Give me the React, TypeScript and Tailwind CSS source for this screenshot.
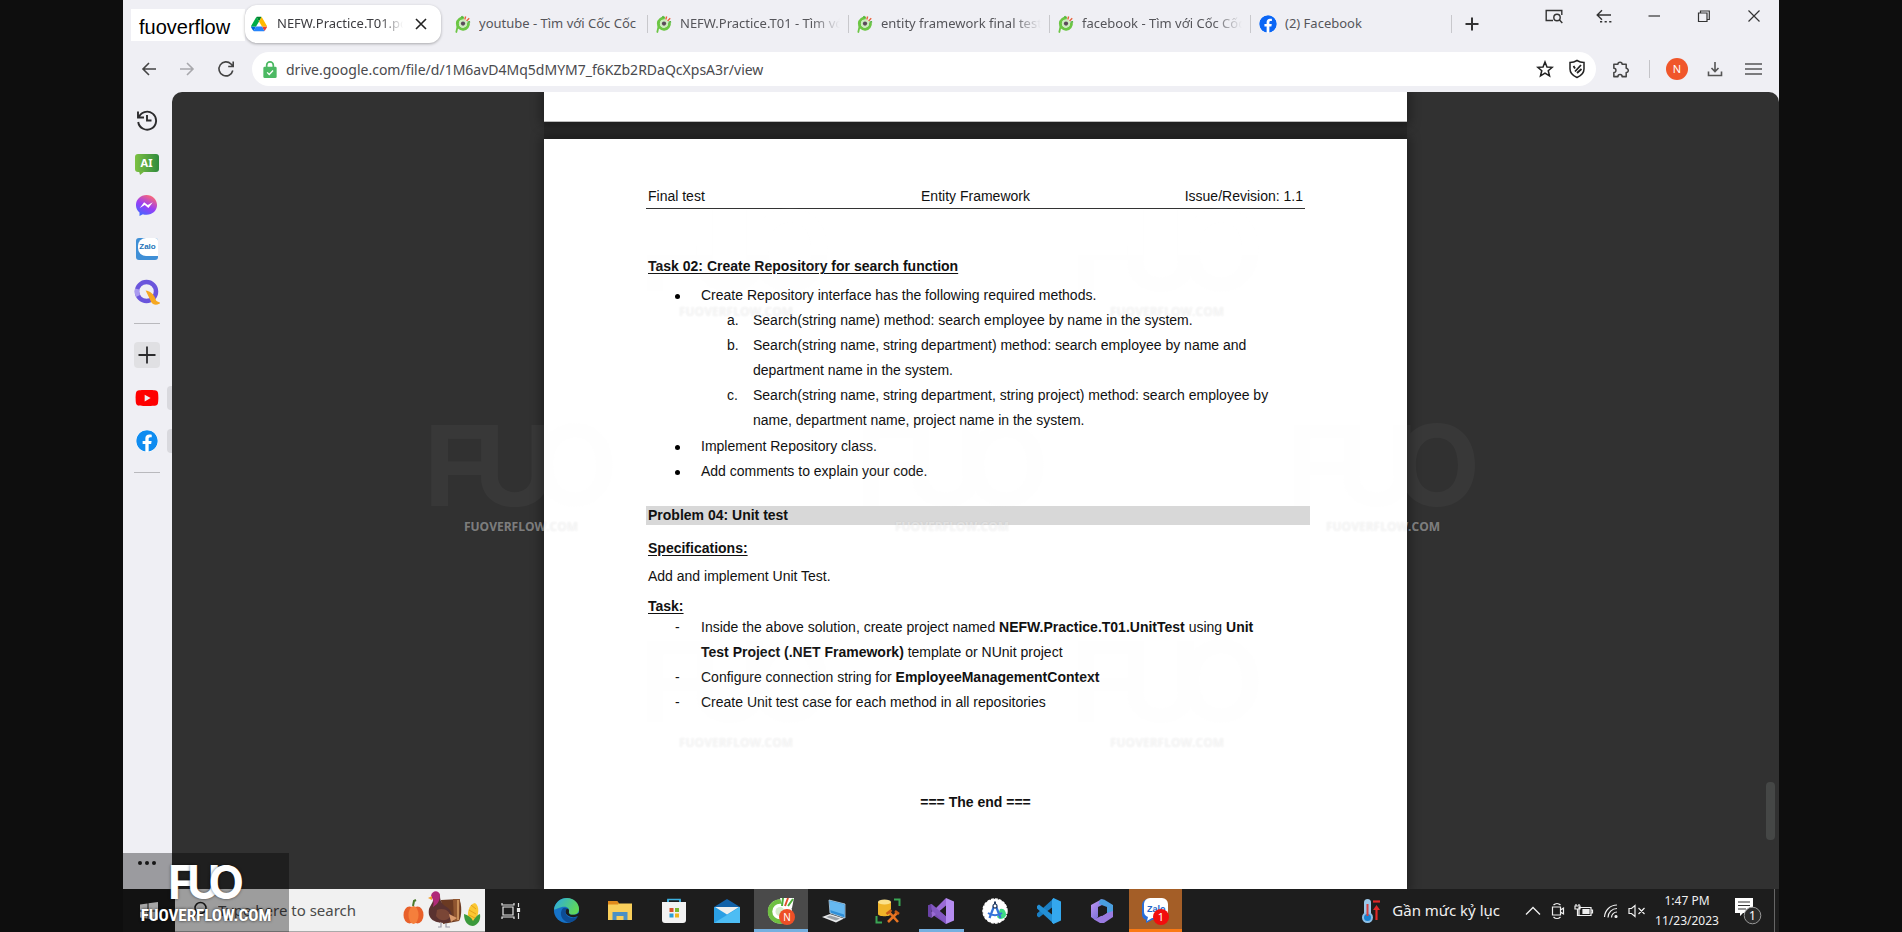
import type { ReactNode } from "react";
import { FaFacebook, FaYoutube } from "react-icons/fa";

const DriveIcon = () => (
  <svg viewBox="0 0 87 78" className="h-4 w-4 shrink-0">
    <path d="M6.6 66.9l3.8 6.6c.8 1.4 2 2.500 3.300 3.300L27.500 53H0c0 1.500.4 3.100 1.200 4.500z" fill="#0066da" />
    <path d="M43.700 25L29.900 1.200c-1.300.8-2.500 1.900-3.300 3.300L1.200 48.500C.4 49.900 0 51.500 0 53h27.500z" fill="#00ac47" />
    <path d="M73.600 76.800c1.300-.8 2.500-1.900 3.300-3.300l9.200-16c.8-1.400 1.200-3 1.200-4.500H59.800l5.900 11.500z" fill="#ea4335" />
    <path d="M43.700 25L57.400 1.200C56.100.4 54.500 0 52.900 0H34.400c-1.600 0-3.200.5-4.500 1.200z" fill="#00832d" />
    <path d="M59.800 53H27.500L13.700 76.800c1.400.8 2.900 1.200 4.500 1.200h50.900c1.600 0 3.200-.5 4.500-1.200z" fill="#2684fc" />
    <path d="M73.400 26.500L60.700 4.500c-.8-1.400-2-2.500-3.300-3.300L43.700 25l16.100 28h27.500c0-1.500-.4-3.100-1.200-4.500z" fill="#ffba00" />
  </svg>
);

const CocTabIcon = () => (
  <svg viewBox="0 0 18 20" className="h-[18px] w-4 shrink-0">
    <path d="M3 12L1.500 19" stroke="#6cc644" strokeWidth="2" strokeLinecap="round" />
    <path d="M15 8.500a6.200 6.200 0 1 1-5-5" fill="none" stroke="#6cc644" strokeWidth="3.400" />
    <circle cx="9" cy="9.500" r="4.600" fill="#cdeabf" />
    <circle cx="9" cy="9.500" r="2.400" fill="#5b4a5a" />
    <path d="M11 5l1-3.500M13 6.500l3-3" stroke="#e8623d" strokeWidth="1.600" />
    <path d="M8.500 3l-1-2M14 8l3-.6" stroke="#4fae3a" strokeWidth="1.600" />
  </svg>
);

type Tab = { title: string; icon: ReactNode; fade: boolean };

const tabs: Tab[] = [
  { title: "youtube - Tìm với Cốc Cốc", icon: <CocTabIcon />, fade: false },
  { title: "NEFW.Practice.T01 - Tìm với Cốc Cốc", icon: <CocTabIcon />, fade: true },
  { title: "entity framework final test", icon: <CocTabIcon />, fade: true },
  { title: "facebook - Tìm với Cốc Cốc", icon: <CocTabIcon />, fade: true },
  { title: "(2) Facebook", icon: <FaFacebook className="h-[18px] w-[18px] shrink-0 rounded-full bg-white text-[#0b66f5]" />, fade: false },
];

const fadeMask = "[mask-image:linear-gradient(to_right,black_82%,transparent)]";

function TabStrip() {
  return (
    <div className="flex h-[48px] items-start">
      <div className="mt-[9px] ml-2 flex h-8 w-[114px] items-center bg-white pt-1 pl-2 text-[20px] leading-7 text-black">
        fuoverflow
      </div>
      <div className="mt-[5px] flex h-[38px] w-[196px] items-center rounded-xl bg-white pr-3 pl-1.5 shadow-[0_1px_3px_rgba(0,0,0,0.3)]">
        <DriveIcon />
        <span className={`ml-2.5 w-[130px] overflow-hidden font-['Noto_Sans',sans-serif] text-[13px] whitespace-nowrap text-[#3c3c40] ${fadeMask}`}>
          NEFW.Practice.T01.pdf
        </span>
        <button aria-label="Close tab" className="ml-2.5 flex h-4 w-4 items-center justify-center">
          <svg viewBox="0 0 12 12" className="h-3 w-3 shrink-0" stroke="#222" strokeWidth="1.600"><path d="M1 1l10 10M11 1L1 11" /></svg>
        </button>
      </div>
      <div className="mt-[5px] flex h-[38px] pl-1.5">
        {tabs.map((t) => (
          <button key={t.title} className="flex w-[201px] items-center pl-2 text-left">
            {t.icon}
            <span className={`ml-2 w-[160px] overflow-hidden font-['Noto_Sans',sans-serif] text-[13px] whitespace-nowrap text-[#55555a] ${t.fade ? fadeMask : ""}`}>
              {t.title}
            </span>
            <span className="ml-auto h-[18px] w-px shrink-0 bg-[#c8c8cc]" />
          </button>
        ))}
      </div>
      <button aria-label="New tab" className="mt-4 ml-3">
        <svg viewBox="0 0 16 16" className="h-4 w-4" stroke="#333" strokeWidth="2"><path d="M8 1.500v13M1.500 8h13" /></svg>
      </button>
      <div className="mt-[7px] mr-4 ml-auto flex gap-8 text-[#333]">
        <button aria-label="Search tabs">
          <svg viewBox="0 0 18 18" className="h-[18px] w-[18px]" fill="none" stroke="currentColor" strokeWidth="1.400">
            <path d="M8 13.500H1.200V3.500h15.600V8" /><circle cx="12" cy="10.500" r="3.200" /><path d="M14.300 12.800l3 3.200" />
          </svg>
        </button>
        <button aria-label="Restore last tab">
          <svg viewBox="0 0 18 18" className="h-[18px] w-[18px]" fill="none" stroke="currentColor" strokeWidth="1.400">
            <path d="M16 8H2.500M7 3.200L2.200 8 7 12.800" /><path d="M5 14.800h12" strokeDasharray="2.200 2.400" />
          </svg>
        </button>
        <button aria-label="Minimize">
          <svg viewBox="0 0 18 18" className="h-[18px] w-[18px]" stroke="currentColor" strokeWidth="1.200"><path d="M3.500 9h11.500" /></svg>
        </button>
        <button aria-label="Restore window">
          <svg viewBox="0 0 18 18" className="h-[18px] w-[18px]" fill="none" stroke="currentColor" strokeWidth="1.200">
            <path d="M3.500 6h8.500v8.500H3.500zM5.500 6V4h8.800v8.500H12" />
          </svg>
        </button>
        <button aria-label="Close window">
          <svg viewBox="0 0 18 18" className="h-[18px] w-[18px]" stroke="currentColor" strokeWidth="1.200"><path d="M3.500 3.500l11 11M14.500 3.500l-11 11" /></svg>
        </button>
      </div>
    </div>
  );
}

function Toolbar() {
  return (
    <div className="flex h-[44px] items-center pt-0.5 pb-1">
      <button aria-label="Back" className="ml-[18px]">
        <svg viewBox="0 0 16 16" className="h-4 w-4" fill="none" stroke="#444" strokeWidth="1.600"><path d="M15 8H2M8 2L2 8l6 6" /></svg>
      </button>
      <button aria-label="Forward" className="ml-[22px]">
        <svg viewBox="0 0 16 16" className="h-4 w-4" fill="none" stroke="#a8a8ac" strokeWidth="1.600"><path d="M1 8h13M8 2l6 6-6 6" /></svg>
      </button>
      <button aria-label="Reload" className="ml-[22px]">
        <svg viewBox="0 0 18 18" className="h-[18px] w-[18px]" fill="none" stroke="#444" strokeWidth="1.600"><path d="M15.800 10.500A7 7 0 1 1 14 4l2 2.200M16.200 1.500v5h-5" /></svg>
      </button>
      <div className="ml-[17px] flex h-[34px] flex-1 items-center rounded-full bg-white pr-2.5 pl-2.5">
        <svg viewBox="0 0 16 20" className="h-[19px] w-4 shrink-0">
          <path d="M4.500 8V5.500a3.500 3.500 0 0 1 7 0V8" fill="none" stroke="#4cb963" strokeWidth="1.800" />
          <rect x="1" y="7" width="14" height="12" rx="1.500" fill="#4cb963" />
          <path d="M5 13l2.200 2.200L11.200 11" fill="none" stroke="#fff" strokeWidth="1.400" />
        </svg>
        <input
          aria-label="Address"
          readOnly
          value="drive.google.com/file/d/1M6avD4Mq5dMYM7_f6KZb2RDaQcXpsA3r/view"
          className="ml-2 min-w-0 flex-1 bg-transparent font-['Noto_Sans',sans-serif] text-[14px] text-[#4a4a4e] outline-none"
        />
        <button aria-label="Bookmark">
          <svg viewBox="0 0 20 20" className="h-[18px] w-[18px]" fill="none" stroke="#222" strokeWidth="1.700"><path d="M10 2.200l2.200 5.500 5.900.4-4.500 3.800 1.400 5.700L10 14.500l-5 3.100 1.400-5.700L1.900 8.100l5.900-.4z" /></svg>
        </button>
        <button aria-label="Privacy shield" className="ml-3.5">
          <svg viewBox="0 0 18 20" className="h-5 w-[18px]" fill="none" stroke="#222" strokeWidth="1.500">
            <path d="M9 1.500c2 1.300 4.500 2 7 2V10c0 4-3.500 7-7 8.500C5.500 17 2 14 2 10V3.500c2.500 0 5-.7 7-2z" />
            <path d="M5.500 7l1.500 2.500M7 12.500L13 6M9 14l4.500-4" strokeWidth="1.800" />
          </svg>
        </button>
      </div>
      <div className="mr-[17px] ml-[15px] flex items-center">
        <button aria-label="Extensions">
          <svg viewBox="0 0 20 20" className="h-[19px] w-[19px]" fill="none" stroke="#444" strokeWidth="1.600" strokeLinejoin="round">
            <path d="M3 4.500h4.300a2.200 2.200 0 1 1 4.400 0H16v4.300a2.200 2.200 0 1 1 0 4.400v4.300h-4.300a2.200 2.200 0 0 0-4.400 0H3v-4.300a2.200 2.200 0 0 0 0-4.400z" />
          </svg>
        </button>
        <span className="ml-[19px] h-[18px] w-px bg-[#c4c4c8]" />
        <button className="ml-4 flex h-[22px] w-[22px] items-center justify-center rounded-full bg-[#f0562a] font-['Noto_Sans',sans-serif] text-[11px] text-white">N</button>
        <button aria-label="Downloads" className="ml-[19px]">
          <svg viewBox="0 0 16 16" className="h-4 w-4" fill="none" stroke="#555" strokeWidth="1.600"><path d="M8 1v9M4.500 7L8 10.500 11.500 7M1.500 10.500v4h13v-4" /></svg>
        </button>
        <button aria-label="Menu" className="ml-[22px]">
          <svg viewBox="0 0 17 16" className="h-4 w-[17px]" stroke="#555" strokeWidth="1.500"><path d="M0 3h17M0 8h17M0 13h17" /></svg>
        </button>
      </div>
    </div>
  );
}

function SideItem({ label, marker, children }: { label: string; marker?: boolean; children: ReactNode }) {
  return (
    <button aria-label={label} className="flex h-[43px] w-full shrink-0 items-center">
      <span className="flex w-[44px] justify-center pl-[3px]">{children}</span>
      {marker && <span className="h-6 flex-1 rounded-l bg-[#d9d9de]" />}
    </button>
  );
}

function SideDivider() {
  return <div className="ml-[11px] flex h-5 w-[26px] shrink-0 items-center"><span className="h-px w-full bg-[#b9b9bd]" /></div>;
}

function Sidebar() {
  return (
    <nav className="flex w-[49px] shrink-0 flex-col pt-1.5">
      <SideItem label="History">
        <svg viewBox="0 0 22 22" className="h-[22px] w-[22px]" fill="none" stroke="#2b2b2d" strokeWidth="1.900">
          <path d="M2.500 9a9 9 0 1 1-.3 4M2 2.500V8.500h6" /><path d="M11 6v5.500h4.500" />
        </svg>
      </SideItem>
      <SideItem label="AI chat">
        <span className="relative flex h-[18px] w-6 items-center justify-center rounded-[3px] bg-gradient-to-r from-[#7cc142] to-[#2e8b3d] font-['Noto_Sans',sans-serif] text-[11px] leading-[18px] font-bold text-white">
          AI
          <svg viewBox="0 0 6 4" className="absolute top-[17px] left-1 h-1 w-1.5"><path d="M0 0h6L1 4z" fill="#6fb53f" /></svg>
        </span>
      </SideItem>
      <SideItem label="Messenger">
        <svg viewBox="0 0 24 24" className="h-[23px] w-[23px]">
          <defs>
            <linearGradient id="msg" x1="0.2" y1="1" x2="0.700" y2="0">
              <stop offset="0" stopColor="#3a6bff" /><stop offset="0.500" stopColor="#9a3df5" /><stop offset="1" stopColor="#ff6a70" />
            </linearGradient>
          </defs>
          <path d="M12 1C5.700 1 1 5.600 1 11.500c0 3.200 1.400 6 3.700 7.900V23l3.500-1.900c1.200.4 2.500.6 3.800.6 6.300 0 11-4.500 11-10.200S18.300 1 12 1z" fill="url(#msg)" />
          <path d="M5 14.500l4.500-6 3.800 3 5.200-3-4.500 6-3.800-3z" fill="#fff" />
        </svg>
      </SideItem>
      <SideItem label="Zalo">
        <span className="flex h-[22px] w-[22px] items-center justify-end overflow-hidden rounded-[3px] bg-[#3f8fd6] pb-1">
          <span className="flex h-[18px] w-5 items-center justify-center rounded-l-lg bg-white text-[8px] font-bold text-[#2674b8]">Zalo</span>
        </span>
      </SideItem>
      <SideItem label="Search assistant">
        <svg viewBox="0 0 26 26" className="h-[26px] w-[26px]" fill="none">
          <circle cx="12.500" cy="12.500" r="9.500" stroke="#6a55dc" strokeWidth="4.500" />
          <path d="M4 17a9.500 9.500 0 0 1-.8-7" stroke="#a99af0" strokeWidth="4.500" />
          <path d="M13 12.500c4 1 7 4.500 8.500 9.500 1 1 2.500 1.500 3.500 2-3 1.500-6 .500-7.500-2L13 12.500z" fill="#f6a821" stroke="#f6a821" strokeWidth="1.500" />
        </svg>
      </SideItem>
      <SideDivider />
      <SideItem label="Add shortcut">
        <span className="flex h-[26px] w-[26px] items-center justify-center rounded bg-[#e0e0e3]">
          <svg viewBox="0 0 18 18" className="h-[18px] w-[18px]" stroke="#2b2b2d" strokeWidth="1.800"><path d="M9 .5v17M.5 9h17" /></svg>
        </span>
      </SideItem>
      <SideItem label="YouTube" marker>
        <FaYoutube className="h-6 w-6 shrink-0 text-[#fe0000]" />
      </SideItem>
      <SideItem label="Facebook" marker>
        <FaFacebook className="h-[22px] w-[22px] shrink-0 rounded-full bg-white text-[#0f8cf0]" />
      </SideItem>
      <SideDivider />
      <button aria-label="More" className="mt-auto mb-6 ml-[15px] flex gap-[3px]">
        <span className="h-1 w-1 rounded-full bg-[#222]" />
        <span className="h-1 w-1 rounded-full bg-[#222]" />
        <span className="h-1 w-1 rounded-full bg-[#222]" />
      </button>
    </nav>
  );
}

function Item({ mark, children }: { mark: ReactNode; children: ReactNode }) {
  return (
    <li className="flex">
      <span className="w-[26px] shrink-0">{mark}</span>
      <div className="whitespace-nowrap">{children}</div>
    </li>
  );
}

const Dot = () => <span className="mt-[11px] block h-[5px] w-[5px] rounded-full bg-black" />;

function DocumentPage() {
  return (
    <article className="h-full bg-white px-[102px] pt-[45px] text-[14px] leading-[25px] text-[#111] shadow-[0_0_10px_3px_rgba(0,0,0,0.35)]">
      <header className="grid grid-cols-3 border-b border-[#333] px-0.5 leading-6">
        <span>Final test</span>
        <span className="text-center">Entity Framework</span>
        <span className="text-right">Issue/Revision: 1.1</span>
      </header>
      <div className="px-0.5">
        <h2 className="mt-[45px] font-bold underline underline-offset-2">Task 02: Create Repository for search function</h2>
        <ul className="mt-1 pl-[27px]">
          <Item mark={<Dot />}>
            Create Repository interface has the following required methods.
            <ol className="pb-px pl-[26px]">
              <Item mark="a.">Search(string name) method: search employee by name in the system.</Item>
              <Item mark="b.">Search(string name, string department) method: search employee by name and<br />department name in the system.</Item>
              <Item mark="c.">Search(string name, string department, string project) method: search employee by<br />name, department name, project name in the system.</Item>
            </ol>
          </Item>
          <Item mark={<Dot />}>Implement Repository class.</Item>
          <Item mark={<Dot />}>Add comments to explain your code.</Item>
        </ul>
      </div>
      <h2 className="mt-[22px] -mr-[5px] bg-[#d8d8d8] pl-0.5 leading-[19px] font-bold">Problem 04: Unit test</h2>
      <div className="px-0.5">
        <h3 className="mt-[11px] font-bold underline underline-offset-2">Specifications:</h3>
        <p className="mt-[3px]">Add and implement Unit Test.</p>
        <h3 className="mt-[9px] leading-[17px] font-bold underline underline-offset-2">Task:</h3>
        <ul className="pl-[27px]">
          <Item mark="-">Inside the above solution, create project named <b>NEFW.Practice.T01.UnitTest</b> using <b>Unit<br />Test Project (.NET Framework)</b> template or NUnit project</Item>
          <Item mark="-">Configure connection string for <b>EmployeeManagementContext</b></Item>
          <Item mark="-">Create Unit test case for each method in all repositories</Item>
        </ul>
        <p className="mt-[75px] text-center font-bold">=== The end ===</p>
      </div>
    </article>
  );
}

function Watermark({ place }: { place: string }) {
  return (
    <div className={`absolute flex w-[172px] flex-col items-center ${place}`}>
      <div className="flex font-['Inter',sans-serif] text-[112px] leading-[84px] font-bold text-[#f0f0f0] opacity-[0.035]">
        <span className="-mr-4">F</span><span className="-mr-6">U</span><span>O</span>
      </div>
      <span className="mt-3 font-['Open_Sans',sans-serif] text-[12px] leading-4 font-bold text-white/40 [text-shadow:0_0_2px_rgba(0,0,0,0.08)]">FUOVERFLOW.COM</span>
    </div>
  );
}

function Viewer() {
  return (
    <main className="relative min-w-0 flex-1 overflow-hidden rounded-t-[10px] bg-[#313131]">
      <div className="mx-auto flex h-full w-[863px] flex-col gap-[17px] bg-[#292929]">
        <div className="h-[30px] shrink-0 border-b border-[#bbb] bg-white shadow-[0_0_10px_3px_rgba(0,0,0,0.35)]" />
        <div className="min-h-0 flex-1"><DocumentPage /></div>
      </div>
      <div className="pointer-events-none absolute inset-0">
        <Watermark place="top-[116px] left-[478px]" />
        <Watermark place="top-[116px] left-[909px]" />
        <Watermark place="top-[331px] left-[263px]" />
        <Watermark place="top-[331px] left-[694px]" />
        <Watermark place="top-[331px] left-[1125px]" />
        <Watermark place="top-[547px] left-[478px]" />
        <Watermark place="top-[547px] left-[909px]" />
      </div>
      <div className="absolute right-1 bottom-[49px] h-[58px] w-[9px] rounded bg-[#454746]" />
    </main>
  );
}

const EdgeIcon = () => (
  <svg viewBox="0 0 28 28" className="h-[27px] w-[27px]">
    <defs>
      <linearGradient id="eg" x1="0" y1="0" x2="1" y2="0.400"><stop offset="0" stopColor="#2aa9e8" /><stop offset="1" stopColor="#5fd85a" /></linearGradient>
    </defs>
    <circle cx="14" cy="14" r="13" fill="#1673c8" />
    <path d="M1 13C2 5.500 8 1 14.500 1 22 1 27 6.500 27 12.500c0 4-3 6-6.500 6-3 0-4.500-1.500-4-3 1-3-1-5.500-4.500-5.500C7 10 3 13 1 13z" fill="url(#eg)" />
    <path d="M10 12c-4 5-1 13 6 14.500 4 0 8-2.500 9.500-6C20 23 13 21 13 15.500c0-2 .5-2.500 1.500-3.500-1.500-1-3-1-4.500 0z" fill="#0d4c94" />
    <path d="M14.500 12c-2 2-2 5 .5 7 3.500 2.500 8 2.500 11.500 .5l1.500-4c-2 2-5 3-7.500 3-3 0-4.500-1.500-4-3 .500-1.500 0-3-2-3.500z" fill="#1d1d1d" />
  </svg>
);
const FolderIcon = () => (
  <svg viewBox="0 0 26 22" className="h-[22px] w-[26px]">
    <path d="M1 1h9l2 2.500h13V20H1z" fill="#f9cf5b" /><path d="M1 1h9l2 2.500-1 1H1z" fill="#e08a1c" />
    <path d="M5.500 20v-8h15v8h-4v-4h-7v4z" fill="#4a90c4" />
  </svg>
);
const StoreIcon = () => (
  <svg viewBox="0 0 26 28" className="h-7 w-[26px]">
    <path d="M7 7V2.500h12V7" fill="none" stroke="#3db1e0" strokeWidth="1.600" />
    <path d="M1 5h24v18a3 3 0 0 1-3 3H4a3 3 0 0 1-3-3z" fill="#f2f2f2" />
    <path d="M7 5V2.500M19 5V2.500" stroke="#3db1e0" strokeWidth="1.600" />
    <path d="M8.500 11h4v4h-4z" fill="#d9532c" /><path d="M14 11h4v4h-4z" fill="#7cb82f" /><path d="M8.500 16.500h4v4h-4z" fill="#2a9fd8" /><path d="M14 16.500h4v4h-4z" fill="#f0b51e" />
  </svg>
);
const MailIcon = () => (
  <svg viewBox="0 0 26 26" className="h-[26px] w-[26px]">
    <path d="M0 9L13 1l13 8v3H0z" fill="#1262a8" /><path d="M0 9h26v16H0z" fill="#2a9fe4" /><path d="M0 25L26 9v16z" fill="#4dbdf4" /><path d="M1 9h24l-12 7.500z" fill="#f0f0ee" />
  </svg>
);
const CocIcon = () => (
  <svg viewBox="0 0 28 28" className="h-7 w-7">
    <circle cx="13" cy="14.500" r="12" fill="#fff" />
    <path d="M21 8.500A10 10 0 1 0 21 20.500" fill="none" stroke="#6fc042" strokeWidth="4.500" />
    <circle cx="13" cy="14.500" r="4.500" fill="#d7eccb" />
    <path d="M13 1l14 0-2 10-8 2z" fill="#fff" />
    <path d="M15 9l1-8M21 9l5-7" stroke="#4fae3a" strokeWidth="2" /><path d="M18 9l3-8" stroke="#e0502c" strokeWidth="2" />
    <circle cx="20" cy="20" r="8" fill="#ee4f27" />
    <text x="20" y="24" textAnchor="middle" fontSize="10" fill="#fff" fontFamily="Noto Sans, sans-serif">N</text>
  </svg>
);
const LaptopIcon = () => (
  <svg viewBox="0 0 26 26" className="h-[26px] w-[26px]">
    <path d="M8 2l16 4v14L9 15z" fill="#2f8fd8" stroke="#b8d4e8" strokeWidth=".8" /><path d="M9 3l14 3.600v10L9 12z" fill="#66b8f0" />
    <path d="M1 19l8-3 14 4.500-8 4z" fill="#e8eaec" /><path d="M5 19l4-1.500 10 3-4 2z" fill="#9aa0a6" />
  </svg>
);
const SqlIcon = () => (
  <svg viewBox="0 0 26 26" className="h-[26px] w-[26px]" fill="none">
    <path d="M3 4v12c0 3 13 3 13 0V4z" fill="#f0b429" /><ellipse cx="9.500" cy="4" rx="6.500" ry="2.500" fill="#fbe08a" />
    <path d="M19 1.500h5.500V8M7 24.500H1.500V18" stroke="#3aa655" strokeWidth="2" />
    <path d="M13 24l9-9M14 14l9 10" stroke="#e87422" strokeWidth="2.600" /><path d="M11.500 16l5-4M20 13l4 3" stroke="#c85d16" strokeWidth="2.600" />
  </svg>
);
const VsIcon = () => (
  <svg viewBox="0 0 26 26" className="h-[26px] w-[26px]">
    <path d="M0 7.500L3.500 6 18 18.500V26L3.500 16v-6L0 18.500z" fill="#7b50b8" />
    <path d="M0 7.500L3.500 6v14L0 18.500z" fill="#6a42a6" />
    <path d="M3.500 20L18 7.500V0L3.500 14.500z" fill="#9a6ad6" />
    <path d="M3.500 6L18 18.500V26L3.500 12z" fill="#8358c2" />
    <path d="M18 0l8 3.500v19L18 26z" fill="#b58cf0" />
  </svg>
);
const AndroidStudioIcon = () => (
  <svg viewBox="0 0 26 26" className="h-[26px] w-[26px]" fill="none">
    <circle cx="13" cy="13" r="12" fill="#fff" stroke="#fff" strokeWidth="1.500" strokeDasharray="3 1" />
    <path d="M18 11a5 5 0 1 1-3 8z" fill="#3ddc84" />
    <path d="M12.500 7L7.500 20M13.500 7l5 13" stroke="#3473d9" strokeWidth="2.200" /><path d="M6 15c4 3 10 3 14 0" stroke="#3473d9" strokeWidth="1.800" />
    <path d="M13 3.500v4" stroke="#223a60" strokeWidth="2" /><circle cx="13" cy="8" r="2" stroke="#223a60" strokeWidth="1.200" fill="#fff" />
  </svg>
);
const VsCodeIcon = () => (
  <svg viewBox="0 0 26 26" className="h-[26px] w-[26px]">
    <path d="M19 0L2 15.500v2.500l2 1.500L19 8z" fill="#1a7fc4" /><path d="M19 26L2 10.500V8l2-1.500L19 18z" fill="#2390d6" /><path d="M18.500 0L26 3.500v19L18.500 26 17 24.500V1.500z" fill="#34a8ee" />
  </svg>
);
const OfficeIcon = () => (
  <svg viewBox="0 0 26 26" className="h-[26px] w-[26px]">
    <defs><linearGradient id="of" x1="0" y1="0" x2="1" y2="1"><stop offset="0" stopColor="#c69af5" /><stop offset="1" stopColor="#5b5fd0" /></linearGradient></defs>
    <path d="M13 1L2 7v12l4 3 3-3V9l8-4z" fill="url(#of)" />
    <path d="M11 1.500h4L24 7v12l-6-4V9l-8-3z" fill="#4a9fe0" />
    <path d="M24 13v6l-9 6h-4l-6-3.500 13-6.500z" fill="#9a7be0" />
    <path d="M13 8.500l4 2.500v4.500L13 18l-4-2.500V11z" fill="#1d1d1d" />
  </svg>
);
const ZaloIcon = () => (
  <svg viewBox="0 0 30 28" className="h-7 w-[30px]">
    <path d="M8 2h13a6 6 0 0 1 6 6v9a6 6 0 0 1-6 6H12l-6 3V23a6 6 0 0 1-4-6V8a6 6 0 0 1 6-6z" fill="#2a6fd8" /><path d="M10 1h12a6 6 0 0 1 6 6v8a6 6 0 0 1-6 6H12l-5 3 1-4a6 6 0 0 1-4-6V7a6 6 0 0 1 6-6z" fill="#fff" />
    <text x="7" y="15" fontSize="9" fontWeight="700" fill="#1e64c8" fontFamily="Liberation Sans, sans-serif">Zalo</text>
    <circle cx="21" cy="20" r="8" fill="#f20d0d" />
    <text x="21" y="24" textAnchor="middle" fontSize="11" fill="#fff" fontFamily="Noto Sans, sans-serif">1</text>
  </svg>
);

type TaskbarApp = { name: string; icon: ReactNode; style: string; line: string };

const apps: TaskbarApp[] = [
  { name: "Edge", icon: <EdgeIcon />, style: "", line: "" },
  { name: "File Explorer", icon: <FolderIcon />, style: "", line: "" },
  { name: "Store", icon: <StoreIcon />, style: "", line: "" },
  { name: "Mail", icon: <MailIcon />, style: "", line: "" },
  { name: "Browser", icon: <CocIcon />, style: "bg-[#4a4a4a]", line: "inset-x-0 bg-[#76b0e0]" },
  { name: "Remote desktop", icon: <LaptopIcon />, style: "", line: "" },
  { name: "SQL tools", icon: <SqlIcon />, style: "", line: "" },
  { name: "Visual Studio", icon: <VsIcon />, style: "", line: "inset-x-1 bg-[#76b0e0]" },
  { name: "Android Studio", icon: <AndroidStudioIcon />, style: "", line: "" },
  { name: "Code", icon: <VsCodeIcon />, style: "", line: "" },
  { name: "Office", icon: <OfficeIcon />, style: "", line: "" },
  { name: "Zalo", icon: <ZaloIcon />, style: "bg-[#a45e27]", line: "inset-x-0 bg-[#fb7a14]" },
];

const HolidayArt = () => (
  <svg viewBox="0 0 78 40" className="h-10 w-[78px] shrink-0">
    <ellipse cx="6.500" cy="25" rx="6" ry="8.500" fill="#e8602a" /><ellipse cx="14.500" cy="25" rx="6" ry="8.500" fill="#e8602a" /><ellipse cx="10.500" cy="25" rx="5" ry="9" fill="#f57f3c" />
    <path d="M10 16l1-5 2-1" stroke="#4a7a2a" strokeWidth="2" fill="none" />
    <path d="M38 10l18-1c3 4 3 18 0 22l-16 3z" fill="#6b3a22" /><path d="M50 9h7l-1 22h-5z" fill="#8f5530" /><path d="M55 10v20" stroke="#d9a066" strokeWidth="1.500" />
    <path d="M30 7c0-5 7-5 7-1 0 6 3 9 8 12 6 5 5 15-3 15-9 0-18-3-16-14 2-5 5-7 4-12z" fill="#5a3230" />
    <path d="M28 6c1-6 8-6 9-1 0 4-1 6-3 9l-4 3c1-4 1-6-2-11z" fill="#b02a78" /><path d="M29 6l-4 2 4 2z" fill="#f0a030" />
    <path d="M34 20c6-3 14 1 13 7-4 5-11 4-14-1z" fill="#7a4636" /><path d="M46 24l8 4-6 4z" fill="#d99a6c" />
    <path d="M38 33v4h-3M43 33v4h4" stroke="#9a9aa8" strokeWidth="1.200" fill="none" />
    <path d="M66 31c-3-7 0-17 6-18 5 3 4 13-1 19z" fill="#fbc732" /><path d="M68 15l5 4M66 20l7 4M66 25l6 3" stroke="#e09c18" strokeWidth=".9" />
    <path d="M61 24c0 8 4 12 9 12 5-1 8-6 7-12-3 1-5 4-7 7-2-4-5-6-9-7z" fill="#3c9a3c" />
  </svg>
);

function Tray() {
  return (
    <div className="ml-auto flex items-center font-['Noto_Sans',sans-serif] text-[#f0f0f0]">
      <button className="flex items-center gap-[11px] text-[15px] whitespace-nowrap">
        <svg viewBox="0 0 20 26" className="h-[26px] w-5">
          <rect x="3" y="1" width="7" height="18" rx="3.500" fill="#9cc8ea" /><circle cx="6.500" cy="19.500" r="5.500" fill="#8cc0e8" />
          <circle cx="6.500" cy="19.500" r="3.500" fill="#1a82d0" /><path d="M6.500 6v12" stroke="#d84040" strokeWidth="2" />
          <path d="M12 3.500h7" stroke="#e02828" strokeWidth="2.200" /><path d="M15.500 22V10" stroke="#e02828" strokeWidth="2.200" /><path d="M12 12l3.500-5 3.500 5z" fill="#e02828" />
        </svg>
        Gần mức kỷ lục
      </button>
      <div className="ml-6 flex items-center gap-[9px]">
        <svg viewBox="0 0 18 16" className="h-4 w-[18px]" fill="none" stroke="currentColor" strokeWidth="1.300"><path d="M2 11.500L9 4.500l7 7" /></svg>
        <svg viewBox="0 0 14 18" className="h-[18px] w-3.5" fill="none" stroke="currentColor" strokeWidth="1.200"><path d="M1.500 5h8v8h-8zM9.500 8l3-2v6l-3-2M2.500 3c2-2 5-2 7 0M2.500 15c2 2 5 2 7 0" /></svg>
        <svg viewBox="0 0 20 16" className="h-4 w-5" fill="none" stroke="currentColor" strokeWidth="1.200"><path d="M5 4.500h12v8H5zM17 7h1.500v3H17M1 3h5v3H1zM2 1v2M5 1v2M3.500 6v6.500H5" /><path d="M9 6.500h6v4H9z" fill="currentColor" /></svg>
        <svg viewBox="0 0 16 16" className="h-4 w-4" fill="none" stroke="currentColor" strokeWidth="1.200"><path d="M1.500 14A12.500 12.500 0 0 1 14 2M5 14.500A9 9 0 0 1 14 5.500M8.500 14.500A5.500 5.500 0 0 1 14 9" /><circle cx="13" cy="13.500" r="1" fill="currentColor" /></svg>
        <svg viewBox="0 0 18 16" className="h-4 w-[18px]" fill="none" stroke="currentColor" strokeWidth="1.200"><path d="M1 5.500h2.500L7 2.500v11l-3.500-3H1zM10.500 5l6 6M16.500 5l-6 6" /></svg>
      </div>
      <time className="ml-2 w-[66px] text-center text-[12px] leading-5 whitespace-nowrap">1:47 PM<br />11/23/2023</time>
      <button aria-label="1 notification" className="ml-3.5 h-7 w-7">
        <svg viewBox="0 0 28 28" className="h-7 w-7">
          <path d="M1 1h18v15H9l-3 3v-3H1z" fill="#fff" /><path d="M4 5h12M4 8.500h12M4 12h8" stroke="#333" strokeWidth="1.200" />
          <circle cx="18.500" cy="18.500" r="8.300" fill="#2b2b2b" stroke="#999" />
          <text x="18.500" y="23" textAnchor="middle" fontSize="12" fill="#fff" fontFamily="Noto Sans, sans-serif">1</text>
        </svg>
      </button>
      <span className="mr-1 ml-3 h-[43px] w-px bg-[#666]" />
    </div>
  );
}

function Taskbar() {
  return (
    <footer className="flex h-[43px] shrink-0 items-center bg-[#1d1d1d]">
      <button aria-label="Start" className="flex w-[52px] shrink-0 justify-center">
        <svg viewBox="0 0 18 18" className="h-[18px] w-[18px]" fill="#fff"><path d="M0 2.500l7.500-1v7H0zM8.500 1.300L18 0v8.500H8.500zM0 9.500h7.500v7L0 15.500zM8.500 9.500H18V18l-9.500-1.300z" /></svg>
      </button>
      <label className="flex h-[43px] w-[310px] shrink-0 items-center border-b border-[#aaa] bg-[#f1f1f1] pr-1 pl-[17px]">
        <svg viewBox="0 0 16 18" className="h-[18px] w-4 shrink-0" fill="none" stroke="#222" strokeWidth="1.500"><circle cx="8.500" cy="7" r="5.500" /><path d="M5 11.500L1 16.500" /></svg>
        <input aria-label="Type here to search" placeholder="Type here to search" className="ml-2.5 w-0 min-w-0 flex-1 bg-transparent font-['Noto_Sans',sans-serif] text-[15px] outline-none placeholder:text-[#4a4a4a]" />
        <HolidayArt />
      </label>
      <button aria-label="Task view" className="flex w-[55px] shrink-0 justify-center pr-1">
        <svg viewBox="0 0 20 18" className="h-[18px] w-5" fill="none" stroke="#e8e8e8" strokeWidth="1.200"><path d="M2 5h10v8H2zM1 1v2h12V1M1 17v-2h12v2M17.500 1v4M17.500 11v6" /><path d="M16.500 6.500h2v3h-2z" fill="#e8e8e8" /></svg>
      </button>
      <div className="grid w-[642px] shrink-0 grid-cols-12 self-stretch">
        {apps.map((a) => (
          <button key={a.name} aria-label={a.name} className={`relative flex items-center justify-center ${a.style}`}>
            {a.icon}
            {a.line && <span className={`absolute bottom-0 h-[3px] ${a.line}`} />}
          </button>
        ))}
      </div>
      <Tray />
    </footer>
  );
}

export default function App() {
  return (
    <div className="h-screen overflow-hidden bg-[#0e0e0e] px-[123px] font-['Liberation_Sans',Arial,sans-serif]">
      <div className="relative flex h-full flex-col bg-[#efeff4]">
        <TabStrip />
        <Toolbar />
        <div className="flex min-h-0 flex-1">
          <Sidebar />
          <Viewer />
        </div>
        <Taskbar />
        <div className="pointer-events-none absolute bottom-0 left-0 flex h-[79px] w-[166px] flex-col items-center overflow-hidden bg-black/35 text-white">
          <div className="mt-2.5 flex font-['Inter',sans-serif] text-[46px] leading-[38px] font-bold [text-shadow:0_0_3px_rgba(0,0,0,0.6)]">
            <span className="-mr-2">F</span><span className="-mr-3">U</span><span>O</span>
          </div>
          <span className="font-['Liberation_Sans_Narrow','Roboto_Condensed','Liberation_Sans',sans-serif] text-[17px] leading-[28px] font-bold [text-shadow:0_0_3px_rgba(0,0,0,0.8)]">FUOVERFLOW.COM</span>
        </div>
      </div>
    </div>
  );
}
